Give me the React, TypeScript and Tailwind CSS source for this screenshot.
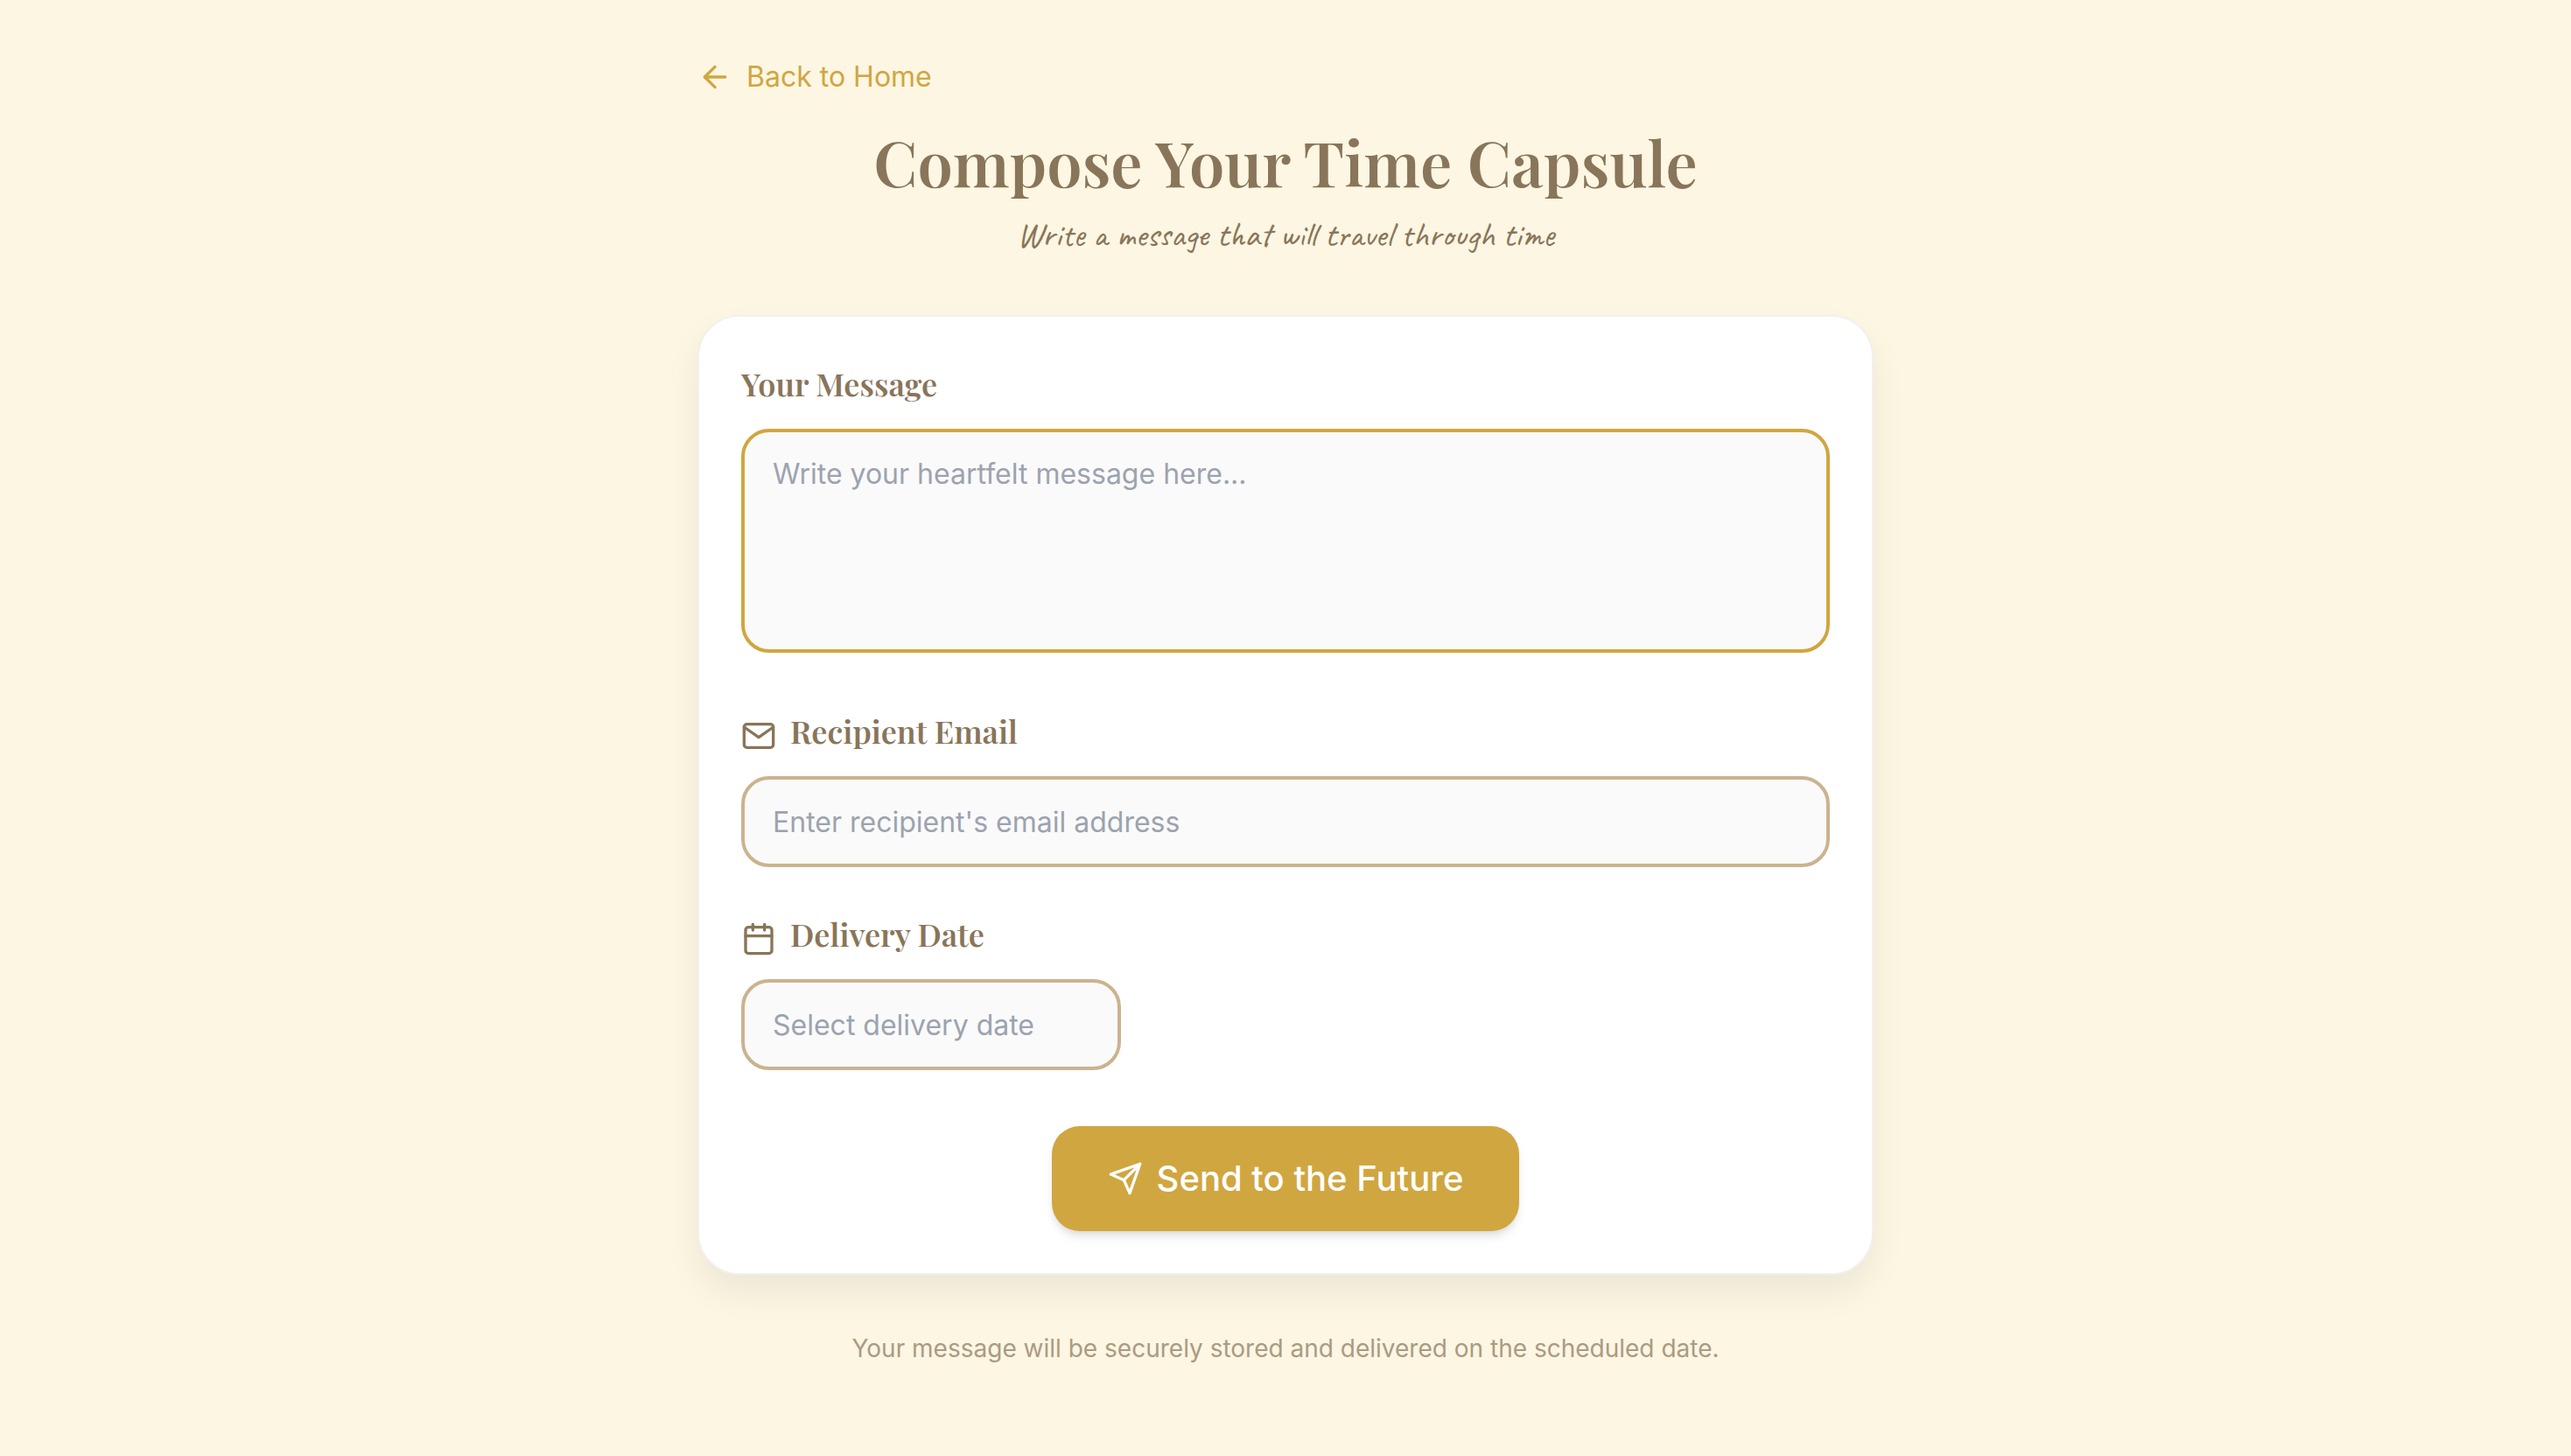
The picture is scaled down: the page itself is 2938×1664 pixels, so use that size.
import { FiArrowLeft, FiCalendar, FiMail, FiSend } from "react-icons/fi";
import type { ReactNode } from "react";

const serif = "font-['Playfair_Display','Liberation_Serif',serif] font-semibold text-[#897559]";
const field =
  "block rounded-[32px] border-4 bg-[#fafafa] px-8 text-[32px] leading-[48px] text-[#897559] placeholder:text-[#9ca3af] placeholder:opacity-100 outline-none";
const labelIcon = "mr-4 inline size-10 align-middle";

function FieldLabel({ id, icon, children }: { id: string; icon?: ReactNode; children: ReactNode }) {
  return (
    <label htmlFor={id} className={`${serif} mb-6 block text-[36px] leading-[56px]`}>
      {icon}
      {children}
    </label>
  );
}

export default function App() {
  return (
    <div className="min-h-screen bg-[#fcf6e3] px-8 pt-16 pb-24 font-['Inter',sans-serif]">
      <main className="mx-auto flex max-w-[1344px] flex-col">
        <a href="#home" className="flex items-center gap-4 self-start text-[32px] leading-[48px] text-[#d0a640]">
          <FiArrowLeft className="size-10" aria-hidden="true" />
          <span>Back to Home</span>
        </a>
        <header className="mt-8 text-center">
          <h1 className={`${serif} text-[72px] leading-[80px]`}>Compose Your Time Capsule</h1>
          <p className="mt-4 font-['Caveat',cursive] text-[40px] leading-[56px] font-medium text-[#897559]">
            Write a message that will travel through time
          </p>
        </header>
        <form
          className="mt-16 rounded-[48px] border-2 border-[#f3f0ec] bg-white p-12 shadow-[0_20px_40px_rgba(0,0,0,0.065)]"
          onSubmit={(event) => event.preventDefault()}
        >
          <FieldLabel id="message">Your Message</FieldLabel>
          <textarea
            id="message"
            placeholder="Write your heartfelt message here..."
            className={`${field} h-64 w-full resize-none border-[#d0a640] py-6`}
          />
          <div className="mt-[61px]">
            <FieldLabel id="email" icon={<FiMail className={labelIcon} aria-hidden="true" />}>
              Recipient Email
            </FieldLabel>
            <input
              id="email"
              type="email"
              placeholder="Enter recipient's email address"
              className={`${field} h-[104px] w-full border-[#cbb38f]`}
            />
          </div>
          <div className="mt-12">
            <FieldLabel id="date" icon={<FiCalendar className={labelIcon} aria-hidden="true" />}>
              Delivery Date
            </FieldLabel>
            <input
              id="date"
              type="text"
              placeholder="Select delivery date"
              className={`${field} h-[104px] w-[434px] border-[#cbb38f]`}
            />
          </div>
          <button
            type="submit"
            className="mx-auto mt-16 flex items-center gap-4 rounded-[32px] bg-[#d0a640] px-16 py-8 text-[40px] leading-[56px] font-medium text-white shadow-[0_8px_12px_-2px_rgba(0,0,0,0.1),0_4px_8px_-4px_rgba(0,0,0,0.1)]"
          >
            <FiSend className="size-10" aria-hidden="true" />
            <span>Send to the Future</span>
          </button>
        </form>
        <p className="mt-16 text-center text-[28px] leading-[40px] text-[#aa9b81]">
          Your message will be securely stored and delivered on the scheduled date.
        </p>
      </main>
    </div>
  );
}
